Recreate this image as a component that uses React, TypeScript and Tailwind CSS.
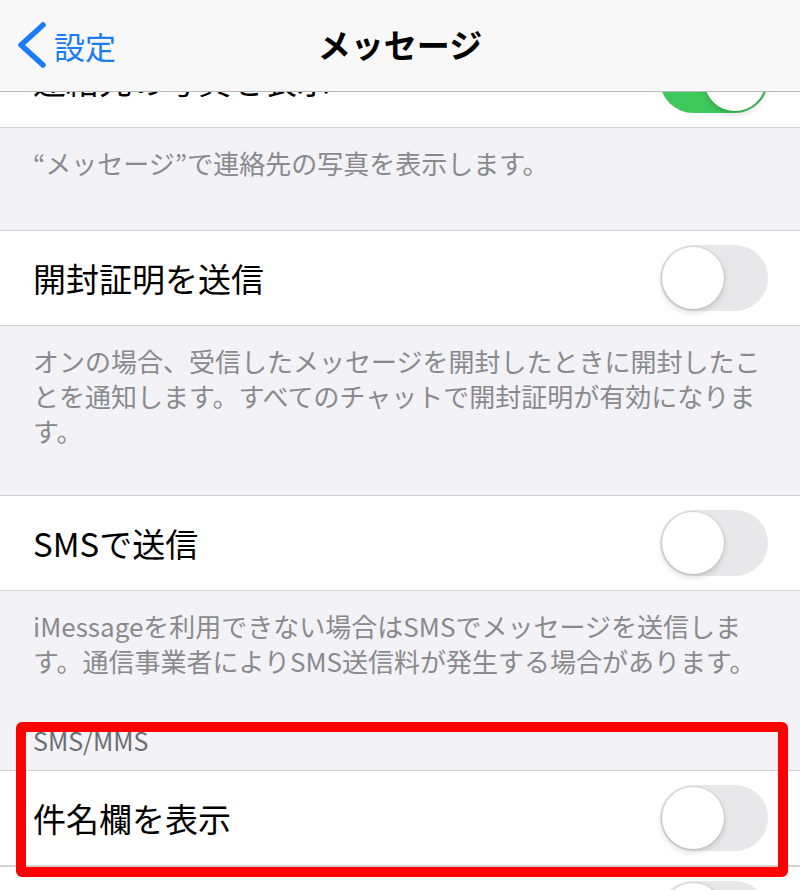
import React from "react";

const FONT = "font-['Noto_Sans_CJK_JP','Noto_Sans',sans-serif]";

function Toggle({ on = false }: { on?: boolean }) {
  return (
    <div
      className={`relative flex h-[66px] w-[108px] shrink-0 items-center rounded-full p-[2px] ${
        on ? "justify-end bg-[#3ec85b]" : "justify-start bg-[#e8e8ea]"
      }`}
    >
      <div className="h-[62px] w-[62px] rounded-full bg-white shadow-[0_3px_6px_rgba(0,0,0,0.16),0_0_0_1px_rgba(0,0,0,0.07)]" />
    </div>
  );
}

function Row({ label, on }: { label?: string; on?: boolean }) {
  return (
    <div className="flex h-[96px] items-center justify-between border-y border-[#d1d1d6] bg-white pl-[33px] pr-[32px]">
      <span className="text-[33px] leading-[40px] text-black">{label}</span>
      <Toggle on={on} />
    </div>
  );
}

function Footer({ text, pb }: { text: string; pb: string }) {
  return (
    <div className={`px-[33px] pt-[17px] ${pb}`}>
      <p className="text-[26px] leading-[35px] text-[#8a8a8e]">{text}</p>
    </div>
  );
}

export default function App() {
  return (
    <div className={`relative h-[890px] w-[800px] overflow-hidden bg-[#f2f2f7] ${FONT}`}>
      {/* nav bar */}
      <div className="absolute inset-x-0 top-0 z-10 flex h-[92px] items-center border-b border-[#b9b9bd] bg-[#f8f8f8]">
        <div className="flex items-center pl-[16px]">
          <svg width="34" height="48" viewBox="0 0 34 48" className="-mt-[2px]">
            <path
              d="M27 4 L5 24 L27 44"
              fill="none"
              stroke="#1a7cf6"
              strokeWidth="5.5"
              strokeLinecap="round"
              strokeLinejoin="round"
            />
          </svg>
          <span className="ml-[4px] text-[31px] leading-[40px] text-[#1a7cf6]">設定</span>
        </div>
        <div className="absolute inset-x-0 flex justify-center">
          <span className="pb-[4px] text-[33px] font-bold leading-[40px] text-black">メッセージ</span>
        </div>
      </div>

      {/* content */}
      <div className="pt-[32px]">
        <Row label="連絡先の写真を表示" on />
        <Footer text="“メッセージ”で連絡先の写真を表示します。" pb="pb-[50px]" />
        <Row label="開封証明を送信" />
        <Footer
          text="オンの場合、受信したメッセージを開封したときに開封したことを通知します。すべてのチャットで開封証明が有効になります。"
          pb="pb-[47px]"
        />
        <Row label="SMSで送信" />
        <Footer
          text="iMessageを利用できない場合はSMSでメッセージを送信します。通信事業者によりSMS送信料が発生する場合があります。"
          pb="pb-[40px]"
        />
        <div className="px-[33px] pt-[8px] pb-[16px]">
          <p className="text-[25px] leading-[28px] text-[#6d6d72]">SMS/MMS</p>
        </div>
        <Row label="件名欄を表示" />
        <Row />
      </div>

      {/* highlight */}
      <div className="absolute left-[16px] top-[722px] h-[155px] w-[772px] rounded-[6px] border-[10px] border-[#ff0000]" />
    </div>
  );
}
